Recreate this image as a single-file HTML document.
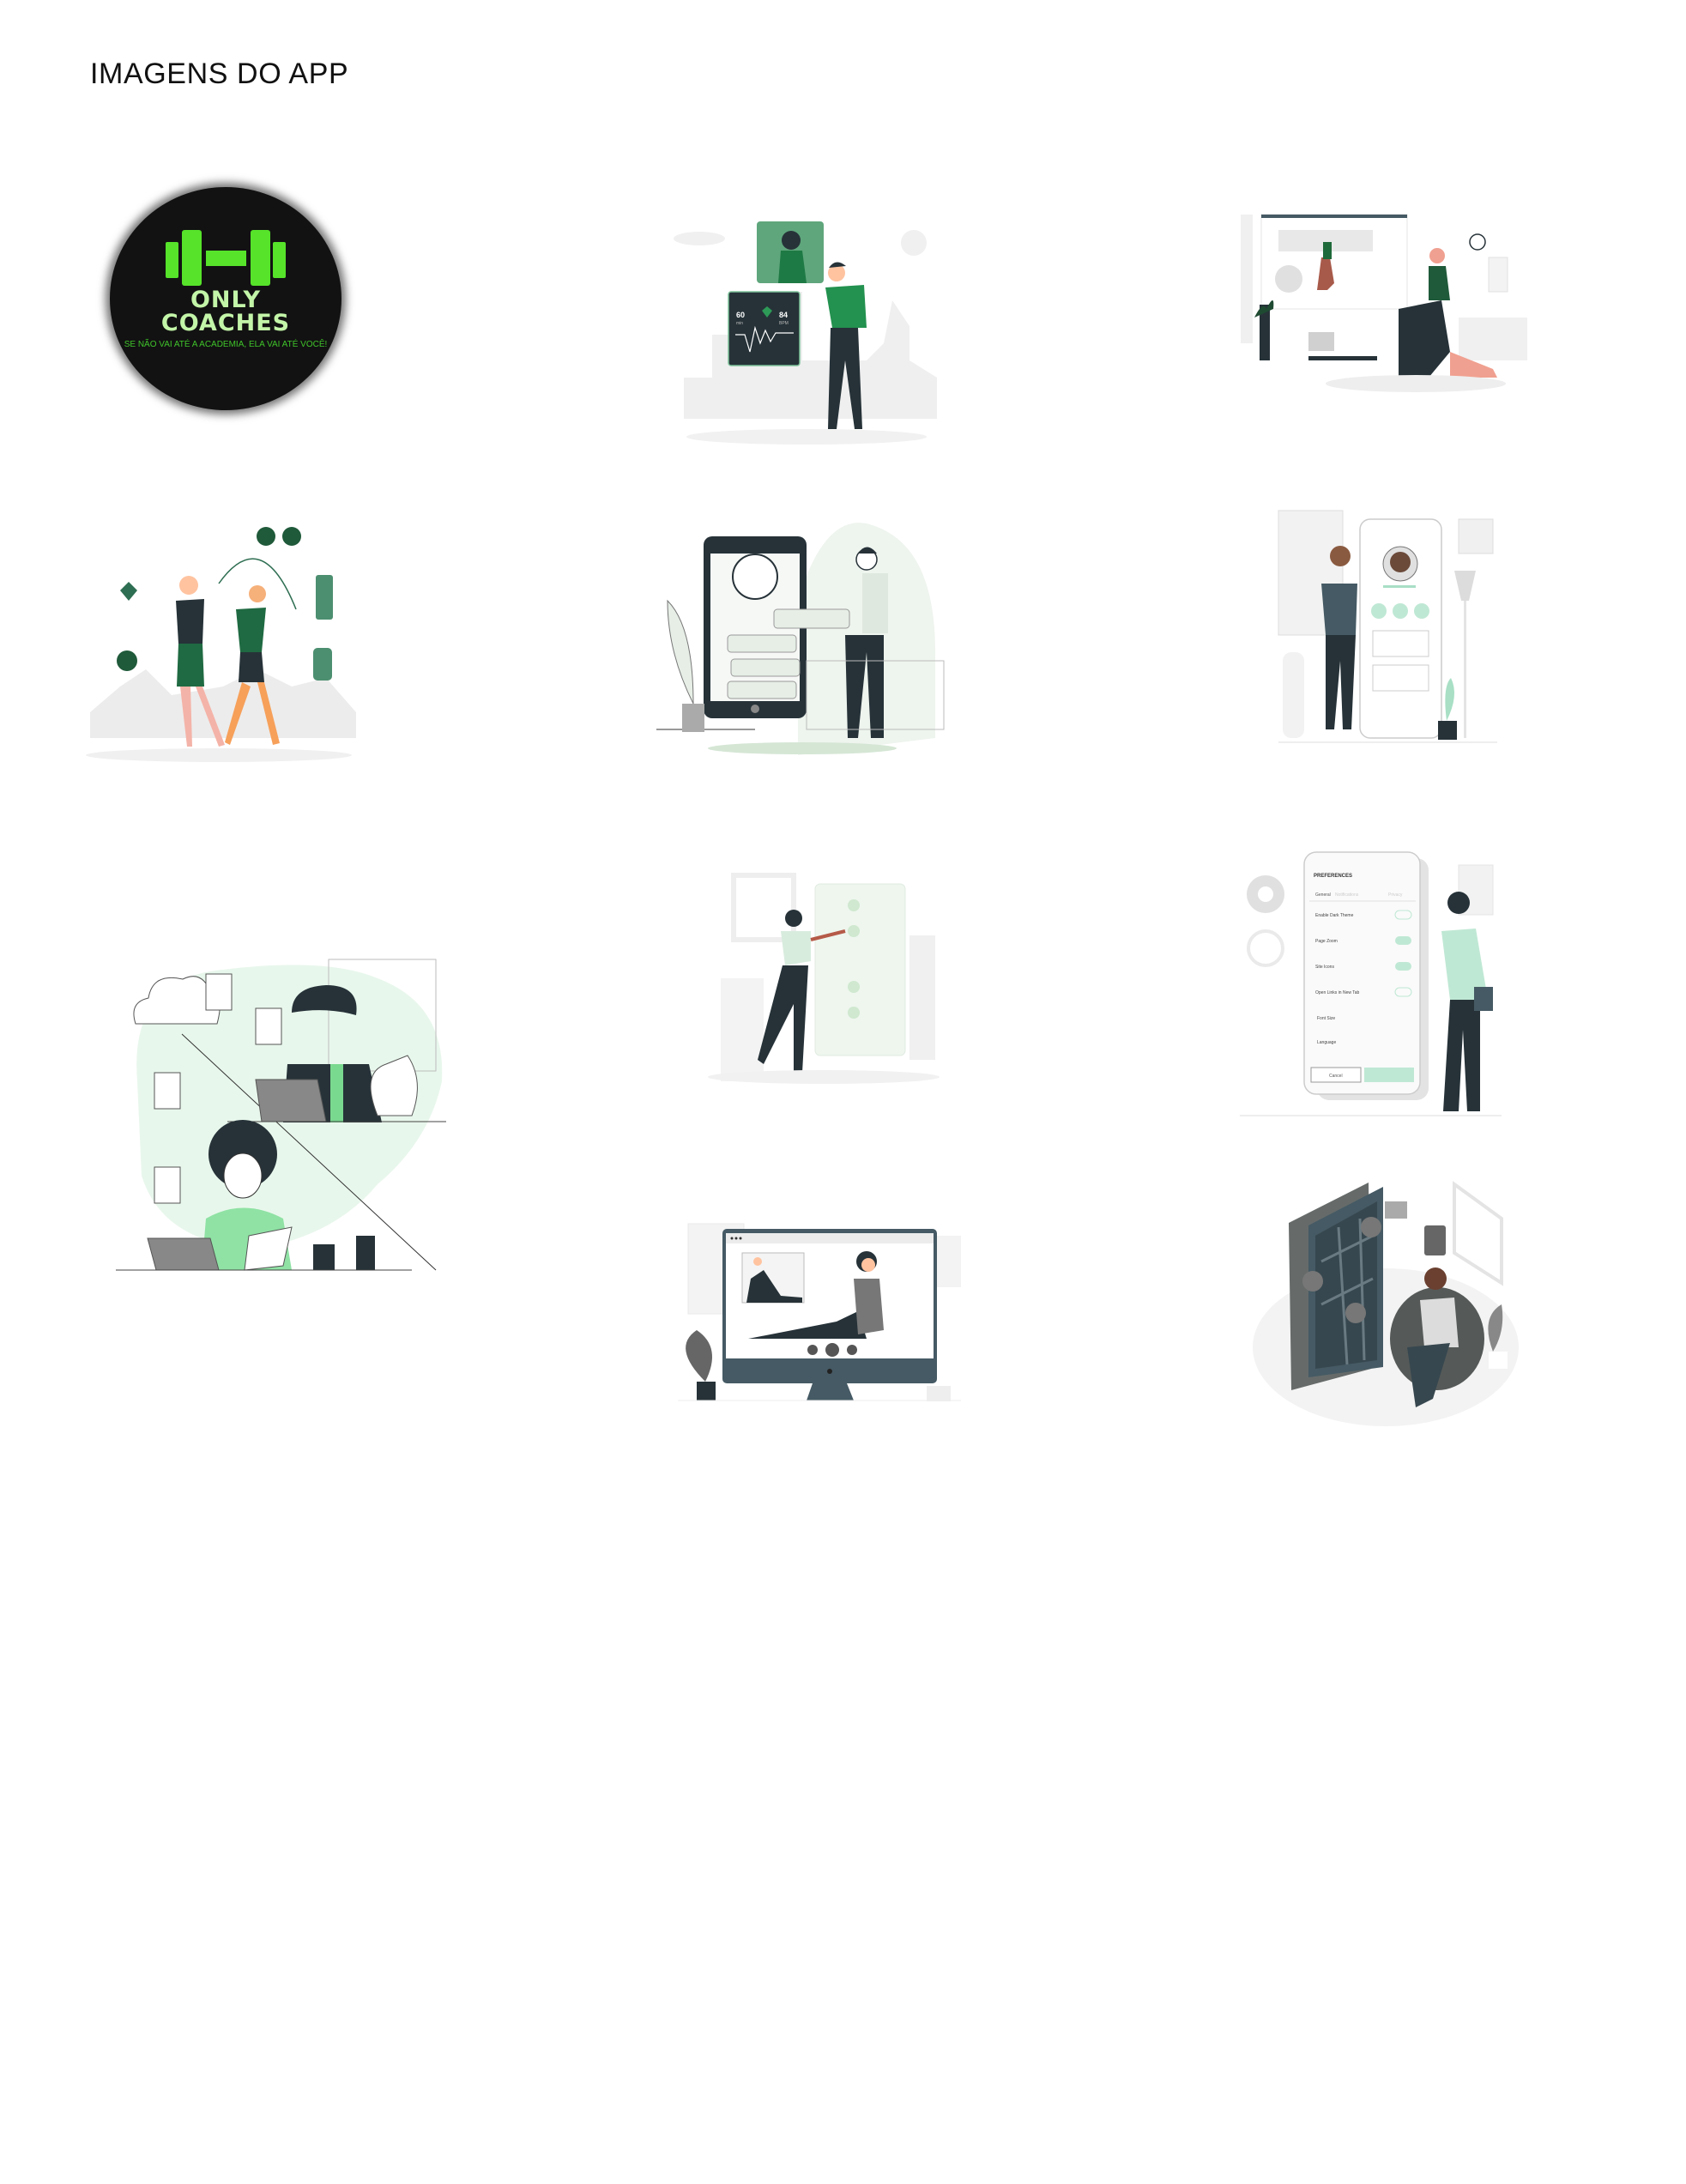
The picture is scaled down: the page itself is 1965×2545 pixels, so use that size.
<!DOCTYPE html>
<html><head><meta charset="utf-8">
<style>
html,body{margin:0;padding:0;background:#fff;}
body{width:1965px;height:2545px;position:relative;overflow:hidden;font-family:"Liberation Sans",sans-serif;}
h1{position:absolute;left:105px;top:67px;margin:0;font-size:34px;font-weight:400;letter-spacing:0.6px;color:#111;}
#logo{position:absolute;left:128px;top:218px;width:270px;height:260px;border-radius:50%;background:#121212;box-shadow:0 0 10px 5px rgba(0,0,0,.55);}
.t1{position:absolute;left:0;width:270px;text-align:center;color:#c3f5a8;font-weight:700;font-family:"DejaVu Sans",sans-serif;letter-spacing:1px}
svg{position:absolute;left:0;top:0}
</style></head><body>
<h1>IMAGENS DO APP</h1>
<div id="logo">
 <div style="position:absolute;left:65px;top:64px;width:15px;height:42px;background:#56e32a;border-radius:2px"></div>
 <div style="position:absolute;left:84px;top:50px;width:23px;height:65px;background:#56e32a;border-radius:3px"></div>
 <div style="position:absolute;left:112px;top:74px;width:47px;height:18px;background:#56e32a"></div>
 <div style="position:absolute;left:164px;top:50px;width:23px;height:65px;background:#56e32a;border-radius:3px"></div>
 <div style="position:absolute;left:190px;top:64px;width:15px;height:42px;background:#56e32a;border-radius:2px"></div>
 <div class="t1" style="top:118px;font-size:27px;line-height:28px">ONLY</div>
 <div class="t1" style="top:145px;font-size:27px;line-height:28px">COACHES</div>
 <div style="position:absolute;left:0;width:270px;top:178px;text-align:center;color:#3fc42a;font-size:10px;white-space:nowrap;">SE NÃO VAI ATÉ A ACADEMIA, ELA VAI ATÉ VOCÊ!</div>
</div>
<svg width="1965" height="2545" viewBox="0 0 1965 2545" font-family="Liberation Sans, sans-serif">
<!-- image 2 -->
<g>
 <path d="M797 488 L797 440 L830 440 L830 390 L850 390 L850 340 L935 340 L935 420 L1010 420 L1030 400 L1040 350 L1060 380 L1060 420 L1092 440 L1092 488 Z" fill="#efefef"/>
 <ellipse cx="815" cy="278" rx="30" ry="8" fill="#f0f0f0"/>
 <circle cx="1065" cy="283" r="15" fill="#f0f0f0"/>
 <ellipse cx="940" cy="509" rx="140" ry="9" fill="#f1f1f1"/>
 <rect x="882" y="258" width="78" height="72" rx="4" fill="#5fa67c"/>
 <path d="M907 330 L910 292 L935 292 L940 330 Z" fill="#1e7a44"/>
 <circle cx="922" cy="280" r="11" fill="#263238"/>
 <rect x="849" y="340" width="83" height="86" rx="3" fill="#263238" stroke="#7fc39b" stroke-width="1.5"/>
 <text x="858" y="370" font-size="9" fill="#fff" font-weight="700">60</text>
 <text x="908" y="370" font-size="9" fill="#fff" font-weight="700">84</text>
 <text x="858" y="378" font-size="5" fill="#bbb">min</text>
 <text x="908" y="378" font-size="5" fill="#bbb">BPM</text>
 <path d="M888 362 l6 -5 l6 5 l-6 8 z" fill="#2e9a57"/>
 <polyline points="857,390 868,390 874,410 880,382 886,400 892,385 898,398 904,388 925,388" fill="none" stroke="#fff" stroke-width="1.2"/>
 <path d="M962 335 L1007 332 L1010 382 L970 382 Z" fill="#23914f"/>
 <circle cx="975" cy="318" r="10" fill="#ffc3a0"/>
 <path d="M966 312 q8 -12 20 -2 z" fill="#263238"/>
 <path d="M968 382 L1000 382 L1005 500 L996 500 L985 420 L975 500 L965 500 Z" fill="#263238"/>
</g>
<!-- image 3 -->
<g>
 <rect x="1446" y="250" width="14" height="150" fill="#f0f0f0"/>
 <rect x="1470" y="250" width="170" height="110" fill="#fff" stroke="#e4e4e4"/>
 <rect x="1470" y="250" width="170" height="4" fill="#455a64"/>
 <rect x="1490" y="268" width="110" height="25" fill="#e8e8e8"/>
 <circle cx="1502" cy="325" r="16" fill="#e0e0e0"/>
 <path d="M1540 300 l10 0 l5 30 l-8 8 l-12 0 z" fill="#a85a4a"/>
 <rect x="1542" y="282" width="10" height="20" fill="#1e6a3a"/>
 <rect x="1700" y="370" width="80" height="50" fill="#f0f0f0"/>
 <rect x="1735" y="300" width="22" height="40" fill="#f3f3f3" stroke="#e2e2e2"/>
 <path d="M1665 310 l20 0 l5 40 l-25 0 z" fill="#1f5a3a"/>
 <circle cx="1675" cy="298" r="9" fill="#f0a090"/>
 <path d="M1630 360 L1680 350 L1690 410 L1665 440 L1630 440 Z" fill="#263238"/>
 <path d="M1690 410 L1740 430 L1745 440 L1690 440 Z" fill="#f0a090"/>
 <rect x="1468" y="355" width="12" height="65" fill="#263238"/>
 <path d="M1462 370 q10 -20 14 -10 q10 -20 8 0 z" fill="#1f4a32"/>
 <rect x="1525" y="387" width="30" height="22" fill="#d0d0d0"/>
 <rect x="1525" y="415" width="80" height="5" fill="#263238"/>
 <ellipse cx="1650" cy="447" rx="105" ry="10" fill="#eeeeee"/>
 <circle cx="1722" cy="282" r="9" fill="none" stroke="#263238" stroke-width="1.5"/>
</g>
<!-- image 4 -->
<g>
 <path d="M105 860 L105 830 L140 800 L170 780 L200 810 L260 800 L300 780 L340 800 L380 790 L415 830 L415 860 Z" fill="#ececec"/>
 <ellipse cx="255" cy="880" rx="155" ry="8" fill="#f0f0f0"/>
 <path d="M140 688 l10 -10 l10 10 l-10 12 z" fill="#2e6e52"/>
 <circle cx="148" cy="770" r="12" fill="#1f5a3a"/>
 <circle cx="310" cy="625" r="11" fill="#1f5a3a"/><circle cx="340" cy="625" r="11" fill="#1f5a3a"/>
 <rect x="368" y="670" width="20" height="52" rx="3" fill="#4c8f70"/>
 <rect x="365" y="755" width="22" height="38" rx="5" fill="#4c8f70"/>
 <path d="M255 680 q50 -70 90 30" fill="none" stroke="#2e6e52" stroke-width="1.5"/>
 <path d="M205 700 L238 698 L236 750 L208 750 Z" fill="#263238"/>
 <path d="M208 750 L236 750 L238 800 L206 800 Z" fill="#1f6a42"/>
 <path d="M210 800 L218 870 L224 870 L222 800 Z M228 800 L255 870 L262 868 L236 800 Z" fill="#f4b3a8"/>
 <circle cx="220" cy="682" r="11" fill="#ffc3a0"/>
 <path d="M275 710 L310 708 L305 760 L280 760 Z" fill="#1f6a42"/>
 <path d="M280 760 L305 760 L308 795 L278 795 Z" fill="#263238"/>
 <path d="M282 795 L262 865 L268 868 L292 800 Z M300 795 L318 868 L326 866 L308 795 Z" fill="#f6a05a"/>
 <circle cx="300" cy="692" r="10" fill="#f6b07a"/>
</g>
<!-- image 5 -->
<g>
 <path d="M930 880 L930 700 Q960 600 1010 610 Q1090 630 1090 760 L1090 860 Z" fill="#eef4ee"/>
 <ellipse cx="935" cy="872" rx="110" ry="7" fill="#d5e6d5"/>
 <rect x="820" y="625" width="120" height="212" rx="10" fill="#263238"/>
 <rect x="828" y="645" width="104" height="172" fill="#f6f8f6"/>
 <circle cx="880" cy="672" r="26" fill="#fff" stroke="#263238" stroke-width="2"/>
 <circle cx="880" cy="826" r="5" fill="#888"/>
 <rect x="902" y="710" width="88" height="22" rx="4" fill="#e6eee6" stroke="#999"/>
 <rect x="848" y="740" width="80" height="20" rx="4" fill="#e6eee6" stroke="#999"/>
 <rect x="852" y="768" width="80" height="20" rx="4" fill="#e6eee6" stroke="#999"/>
 <rect x="848" y="794" width="80" height="20" rx="4" fill="#e6eee6" stroke="#999"/>
 <rect x="1005" y="668" width="30" height="70" fill="#dfe8df"/>
 <circle cx="1010" cy="652" r="12" fill="#fff" stroke="#263238" stroke-width="1.5"/>
 <path d="M1000 645 q10 -15 22 0 z" fill="#263238"/>
 <path d="M985 740 L1030 740 L1030 860 L1015 860 L1010 760 L1000 860 L988 860 Z" fill="#263238"/>
 <path d="M765 850 L880 850" stroke="#333"/>
 <rect x="795" y="820" width="26" height="33" fill="#aaa"/>
 <path d="M808 820 q-30 -60 -30 -120 q30 30 30 120" fill="#e6eee6" stroke="#777"/>
 <rect x="940" y="770" width="160" height="80" fill="none" stroke="#bbb"/>
</g>
<!-- image 6 -->
<g>
 <rect x="1490" y="595" width="75" height="145" fill="#f2f2f2" stroke="#ddd"/>
 <rect x="1585" y="605" width="95" height="255" rx="12" fill="#fff" stroke="#ccc" stroke-width="1.5"/>
 <circle cx="1632" cy="657" r="20" fill="#e0e0e0" stroke="#777"/>
 <circle cx="1632" cy="655" r="12" fill="#6b4a3a"/>
 <rect x="1612" y="682" width="38" height="3" fill="#a8dfc5"/>
 <circle cx="1607" cy="712" r="9" fill="#bfe8d4"/><circle cx="1632" cy="712" r="9" fill="#bfe8d4"/><circle cx="1657" cy="712" r="9" fill="#bfe8d4"/>
 <rect x="1600" y="735" width="65" height="30" fill="#fff" stroke="#ccc"/>
 <rect x="1600" y="775" width="65" height="30" fill="#fff" stroke="#ccc"/>
 <rect x="1700" y="605" width="40" height="40" fill="#f0f0f0" stroke="#ddd"/>
 <path d="M1695 665 L1720 665 L1712 700 L1703 700 Z" fill="#dcdcdc"/>
 <rect x="1706" y="700" width="3" height="160" fill="#e4e4e4"/>
 <rect x="1676" y="840" width="22" height="22" fill="#263238"/>
 <path d="M1686 840 q-5 -40 5 -50 q10 20 -5 50" fill="#a8dfc5"/>
 <path d="M1540 680 L1582 680 L1580 740 L1545 740 Z" fill="#455a64"/>
 <circle cx="1562" cy="648" r="12" fill="#8a5a40"/>
 <path d="M1545 740 L1580 740 L1575 850 L1565 850 L1562 770 L1555 850 L1545 850 Z" fill="#263238"/>
 <rect x="1495" y="760" width="25" height="100" rx="10" fill="#f2f2f2"/>
 <line x1="1490" y1="865" x2="1745" y2="865" stroke="#ddd"/>
</g>
<!-- image 7 -->
<g>
 <path d="M160 1260 Q150 1140 260 1130 Q380 1115 440 1140 Q520 1170 515 1260 Q500 1330 440 1380 Q390 1440 300 1455 Q190 1450 165 1370 Z" fill="#e8f7ec"/>
 <rect x="383" y="1118" width="125" height="130" fill="none" stroke="#bbb"/>
 <path d="M158 1193 q-8 -25 15 -30 q5 -30 40 -22 q20 -10 30 10 q20 5 10 42 Z" fill="#fff" stroke="#555"/>
 <rect x="240" y="1135" width="30" height="42" fill="#fff" stroke="#555"/>
 <rect x="298" y="1175" width="30" height="42" fill="#fff" stroke="#555"/>
 <rect x="180" y="1250" width="30" height="42" fill="#fff" stroke="#555"/>
 <rect x="180" y="1360" width="30" height="42" fill="#fff" stroke="#555"/>
 <line x1="212" y1="1205" x2="508" y2="1480" stroke="#333"/>
 <path d="M340 1180 q0 -30 40 -32 q40 0 35 35 q-35 -10 -75 -3" fill="#263238"/>
 <path d="M335 1240 L430 1240 L445 1308 L330 1308 Z" fill="#263238"/>
 <rect x="385" y="1240" width="15" height="68" fill="#79d98f"/>
 <path d="M298 1258 L370 1258 L380 1307 L305 1307 Z" fill="#888" stroke="#555"/>
 <path d="M440 1300 q-20 -50 10 -60 l25 -10 q20 30 5 70 Z" fill="#fff" stroke="#555"/>
 <line x1="265" y1="1307" x2="520" y2="1307" stroke="#444"/>
 <circle cx="283" cy="1345" r="40" fill="#263238"/>
 <ellipse cx="283" cy="1370" rx="22" ry="26" fill="#fff" stroke="#333"/>
 <path d="M240 1420 Q283 1395 330 1420 L340 1480 L235 1480 Z" fill="#8fe2a4"/>
 <path d="M172 1443 L245 1443 L255 1480 L182 1480 Z" fill="#888" stroke="#555"/>
 <path d="M290 1440 L340 1430 L330 1475 L285 1480 Z" fill="#fff" stroke="#555"/>
 <rect x="365" y="1450" width="25" height="30" fill="#263238"/>
 <rect x="415" y="1440" width="22" height="40" fill="#263238"/>
 <line x1="135" y1="1480" x2="480" y2="1480" stroke="#444"/>
</g>
<!-- image 8 -->
<g>
 <rect x="855" y="1020" width="70" height="75" fill="none" stroke="#eee" stroke-width="6"/>
 <rect x="950" y="1030" width="105" height="200" rx="6" fill="#eef6ee" stroke="#e0ebe0"/>
 <rect x="1060" y="1090" width="30" height="145" fill="#f0f0f0"/>
 <rect x="840" y="1140" width="50" height="120" fill="#f3f3f3"/>
 <circle cx="995" cy="1055" r="7" fill="#cfe8cf"/><circle cx="995" cy="1085" r="7" fill="#cfe8cf"/>
 <circle cx="995" cy="1150" r="7" fill="#cfe8cf"/><circle cx="995" cy="1180" r="7" fill="#cfe8cf"/>
 <path d="M910 1085 L945 1085 L945 1120 L915 1125 Z" fill="#d8ecde"/>
 <circle cx="925" cy="1070" r="10" fill="#263238"/>
 <path d="M912 1125 L942 1125 L935 1250 L925 1250 L925 1170 L890 1240 L883 1235 Z" fill="#263238"/>
 <path d="M945 1095 L985 1085" stroke="#b55a48" stroke-width="4"/>
 <ellipse cx="960" cy="1255" rx="135" ry="8" fill="#f1f1f1"/>
</g>
<!-- image 9 -->
<g>
 <circle cx="1475" cy="1042" r="22" fill="#e0e0e0"/><circle cx="1475" cy="1042" r="9" fill="#fff"/>
 <circle cx="1475" cy="1105" r="20" fill="none" stroke="#eaeaea" stroke-width="4"/>
 <rect x="1700" y="1008" width="40" height="58" fill="#f2f2f2" stroke="#e4e4e4"/>
 <rect x="1535" y="1000" width="130" height="282" rx="14" fill="#e3e3e3"/>
 <rect x="1520" y="993" width="135" height="282" rx="14" fill="#fafafa" stroke="#ccc" stroke-width="1.5"/>
 <text x="1531" y="1022" font-size="6" font-weight="700" fill="#333">PREFERENCES</text>
 <text x="1533" y="1044" font-size="5" fill="#555">General</text>
 <text x="1556" y="1044" font-size="5" fill="#ccc">Notifications</text>
 <text x="1618" y="1044" font-size="5" fill="#ccc">Privacy</text>
 <line x1="1526" y1="1050" x2="1650" y2="1050" stroke="#e0e0e0"/>
 <text x="1533" y="1068" font-size="5" fill="#444">Enable Dark Theme</text>
 <text x="1533" y="1098" font-size="5" fill="#444">Page Zoom</text>
 <text x="1533" y="1128" font-size="5" fill="#444">Site Icons</text>
 <text x="1533" y="1158" font-size="5" fill="#444">Open Links in New Tab</text>
 <text x="1535" y="1188" font-size="5" fill="#444">Font Size</text>
 <text x="1535" y="1216" font-size="5" fill="#444">Language</text>
 <rect x="1626" y="1061" width="19" height="10" rx="5" fill="none" stroke="#bfe8d4"/>
 <rect x="1626" y="1091" width="19" height="10" rx="5" fill="#bfe8d4"/>
 <rect x="1626" y="1121" width="19" height="10" rx="5" fill="#bfe8d4"/>
 <rect x="1626" y="1151" width="19" height="10" rx="5" fill="none" stroke="#bfe8d4"/>
 <rect x="1528" y="1244" width="58" height="17" fill="#fff" stroke="#999"/>
 <text x="1549" y="1255" font-size="5" fill="#555">Cancel</text>
 <rect x="1590" y="1244" width="58" height="17" fill="#bfe8d4"/>
 <circle cx="1700" cy="1052" r="13" fill="#263238"/>
 <path d="M1680 1085 L1720 1082 L1735 1170 L1690 1165 Z" fill="#bfe8d4"/>
 <path d="M1690 1165 L1725 1165 L1725 1295 L1710 1295 L1705 1200 L1700 1295 L1682 1295 Z" fill="#263238"/>
 <rect x="1718" y="1150" width="22" height="28" fill="#455a64"/>
 <line x1="1445" y1="1300" x2="1750" y2="1300" stroke="#ddd"/>
</g>
<!-- image 10 -->
<g>
 <rect x="802" y="1426" width="65" height="105" fill="#f3f3f3" stroke="#e8e8e8"/>
 <rect x="1090" y="1440" width="30" height="60" fill="#f3f3f3"/>
 <rect x="842" y="1432" width="250" height="180" rx="5" fill="#455a64"/>
 <rect x="846" y="1437" width="242" height="146" fill="#fff"/>
 <rect x="846" y="1437" width="242" height="12" fill="#ececec"/>
 <circle cx="853" cy="1443" r="1.5" fill="#333"/><circle cx="858" cy="1443" r="1.5" fill="#333"/><circle cx="863" cy="1443" r="1.5" fill="#333"/>
 <rect x="865" y="1460" width="72" height="58" fill="#f4f4f4" stroke="#bbb"/>
 <path d="M875 1490 L890 1480 L910 1510 L935 1512 L935 1518 L870 1518 Z" fill="#263238"/>
 <circle cx="883" cy="1470" r="5" fill="#ffc3a0"/>
 <path d="M872 1560 L975 1540 L1000 1528 L1010 1560 Z" fill="#263238"/>
 <path d="M995 1490 L1025 1490 L1030 1550 L1000 1555 Z" fill="#777"/>
 <circle cx="1010" cy="1470" r="12" fill="#263238"/>
 <circle cx="1012" cy="1474" r="8" fill="#ffc3a0"/>
 <circle cx="947" cy="1573" r="6" fill="#555"/><circle cx="970" cy="1573" r="8" fill="#555"/><circle cx="993" cy="1573" r="6" fill="#555"/>
 <circle cx="967" cy="1598" r="3" fill="#222"/>
 <path d="M947 1612 L987 1612 L995 1632 L940 1632 Z" fill="#455a64"/>
 <rect x="812" y="1610" width="22" height="22" fill="#263238"/>
 <path d="M822 1610 q-40 -40 -10 -60 q30 20 10 60" fill="#666"/>
 <rect x="1080" y="1615" width="28" height="18" fill="#eee"/>
 <line x1="790" y1="1632" x2="1120" y2="1632" stroke="#eee"/>
</g>
<!-- image 11 -->
<g>
 <ellipse cx="1615" cy="1570" rx="155" ry="92" fill="#f3f3f3"/>
 <path d="M1502 1425 L1595 1378 L1598 1595 L1505 1620 Z" fill="#666b6a"/>
 <path d="M1525 1428 L1612 1383 L1612 1593 L1525 1605 Z" fill="#455a64"/>
 <path d="M1533 1440 L1605 1400 L1605 1585 L1533 1595 Z" fill="#37474f"/>
 <path d="M1540 1470 L1600 1440 M1540 1520 L1600 1490 M1560 1430 L1570 1590 M1585 1420 L1590 1585" stroke="#6a7a82" stroke-width="3"/>
 <circle cx="1598" cy="1430" r="12" fill="#777"/><circle cx="1530" cy="1493" r="12" fill="#777"/><circle cx="1580" cy="1530" r="12" fill="#777"/>
 <rect x="1614" y="1400" width="26" height="20" fill="#aaa"/>
 <rect x="1660" y="1428" width="25" height="35" rx="3" fill="#666"/>
 <path d="M1695 1380 L1750 1420 L1750 1495 L1695 1460 Z" fill="none" stroke="#e4e4e4" stroke-width="4"/>
 <ellipse cx="1675" cy="1560" rx="55" ry="60" fill="#555a58"/>
 <path d="M1655 1515 L1695 1512 L1700 1570 L1660 1570 Z" fill="#dcdcdc"/>
 <circle cx="1673" cy="1490" r="13" fill="#6b4030"/>
 <path d="M1640 1570 L1690 1565 L1670 1630 L1650 1640 Z" fill="#37474f"/>
 <path d="M1740 1575 q-15 -40 10 -55 q5 30 -10 55" fill="#888"/>
 <rect x="1735" y="1575" width="22" height="20" fill="#fff"/>
</g>
</svg>
</body></html>
